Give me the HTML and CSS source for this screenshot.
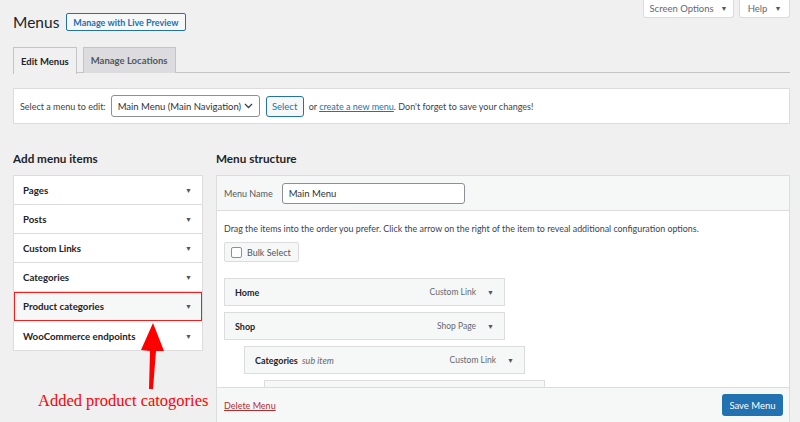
FILE: index.html
```html
<!DOCTYPE html>
<html>
<head>
<meta charset="utf-8">
<link rel="stylesheet" href="styles.css">
</head>
<body>
<div class="wrap">
  <div class="screen-meta">
    <button class="meta-btn meta-screen">Screen Options <span class="tri">▼</span></button>
    <button class="meta-btn meta-help">Help <span class="tri">▼</span></button>
  </div>
  <div class="title-row">
    <h1 class="title">Menus</h1>
    <a class="live-btn">Manage with Live Preview</a>
  </div>
  <div class="tabs">
    <span class="tab tab-active">Edit Menus</span>
    <span class="tab">Manage Locations</span>
  </div>
  <div class="manage-box">
    <span class="lbl">Select a menu to edit:</span>
    <span class="select"><span class="sel-text">Main Menu (Main Navigation)</span>
      <svg class="chev" width="9" height="6" viewBox="0 0 9 6"><path d="M1 1l3.5 3.5L8 1" fill="none" stroke="#3c434a" stroke-width="1.3"/></svg>
    </span>
    <span class="sel-btn">Select</span>
    <span class="lbl">or <a class="link">create a new menu</a>. Don't forget to save your changes!</span>
  </div>
  <div class="columns">
    <div class="col-left">
      <h2 class="col-title">Add menu items</h2>
      <div class="accordion">
        <div class="acc-row">Pages<span class="tri">▼</span></div>
        <div class="acc-row">Posts<span class="tri">▼</span></div>
        <div class="acc-row">Custom Links<span class="tri">▼</span></div>
        <div class="acc-row">Categories<span class="tri">▼</span></div>
        <div class="acc-row acc-hl">Product categories<span class="tri">▼</span></div>
        <div class="acc-row acc-last">WooCommerce endpoints<span class="tri">▼</span></div>
      </div>
      <svg class="arrow" width="30" height="70" viewBox="0 0 30 70">
        <path d="M16 0 L27 28 L19 28 L16 66 L12 66 L13 28 L4 27 Z" fill="#ff0000"/>
      </svg>
      <div class="note">Added product catogories</div>
    </div>
    <div class="col-right">
      <h2 class="col-title">Menu structure</h2>
      <div class="panel">
        <div class="panel-head">
          <span class="lbl">Menu Name</span>
          <span class="name-input">Main Menu</span>
        </div>
        <div class="panel-body">
          <p class="drag-text">Drag the items into the order you prefer. Click the arrow on the right of the item to reveal additional configuration options.</p>
          <div class="bulk"><span class="cbox"></span>Bulk Select</div>
          <div class="items">
            <div class="item"><span class="item-title">Home</span><span class="item-type">Custom Link</span><span class="tri">▼</span></div>
            <div class="item"><span class="item-title">Shop</span><span class="item-type">Shop Page</span><span class="tri">▼</span></div>
            <div class="item depth1"><span class="item-title">Categories <em class="sub">sub item</em></span><span class="item-type">Custom Link</span><span class="tri">▼</span></div>
            <div class="item depth2"></div>
          </div>
        </div>
        <div class="panel-foot">
          <a class="delete">Delete Menu</a>
          <span class="save">Save Menu</span>
        </div>
      </div>
    </div>
  </div>
</div>
</body>
</html>
```

FILE: styles.css
```css
* { box-sizing: border-box; }
html, body { margin: 0; padding: 0; }
body {
  background: #f0f0f1;
  font-family: Lato, "Open Sans", sans-serif;
  font-size: 9px;
  color: #3c434a;
  width: 800px;
  height: 422px;
  overflow: hidden;
}
.wrap { padding: 0 10px 0 13px; }
.tri { font-size: 7px; color: #50575e; }

.screen-meta { float: right; display: flex; gap: 5px; }
.meta-btn {
  height: 18px;
  background: #fff;
  border: 1px solid #dcdcde;
  border-top: none;
  border-radius: 0 0 3px 3px;
  font-family: inherit;
  font-size: 9.5px;
  color: #646970;
  padding: 0 0 1px;
  display: flex;
  align-items: center;
  justify-content: center;
  gap: 7px;
}
.meta-screen { width: 91px; }
.meta-help { width: 51px; }

.title-row { display: flex; align-items: center; padding-top: 13px; height: 31px; }
.title { font-size: 15.5px; font-weight: 400; color: #1d2327; margin: 0 7px 0 0; line-height: 18px; }
.live-btn {
  display: flex; align-items: center; height: 18px;
  border: 1px solid #2271b1; border-radius: 2px;
  background: #f6f7f7; color: #2271b1;
  font-size: 9px; font-weight: 700; padding: 0 6px;
}

.tabs { display: flex; gap: 6px; margin-top: 16px; border-bottom: 1px solid #c3c4c7; height: 26px; }
.tab {
  height: 26px; display: flex; align-items: center; padding: 0 7px;
  border: 1px solid #c3c4c7; border-bottom: none;
  background: #dcdcde; color: #50575e; font-weight: 700; font-size: 9.5px;
}
.tab-active { background: #f0f0f1; color: #1d2327; margin-bottom: -1px; height: 27px; }

.manage-box {
  margin-top: 15px; height: 36px; background: #fff;
  border: 1px solid #dcdcde;
  display: flex; align-items: center; padding: 0 6px;
  font-size: 9px; color: #3c434a;
}
.lbl { white-space: nowrap; }
.select {
  display: flex; align-items: center; justify-content: space-between;
  width: 149px; height: 22px; margin-left: 5px;
  border: 1px solid #8c8f94; border-radius: 3px; padding: 0 6px;
  font-size: 9.5px; color: #2c3338; background: #fff; white-space: nowrap;
}
.sel-btn {
  display: flex; align-items: center; justify-content: center;
  width: 38px; height: 21px; margin: 0 5px 0 6px;
  border: 1px solid #2271b1; border-radius: 3px; background: #f6f7f7; color: #2271b1; font-size: 9.5px;
}
.link { color: #2271b1; text-decoration: underline; }

.columns { display: flex; gap: 13px; margin-top: 27px; }
.col-left { width: 190px; position: relative; }
.col-right { flex: 1; }
.col-title { font-size: 11.7px; font-weight: 700; color: #1d2327; margin: 0; height: 24px; line-height: 14px; }

.accordion { background: #fff; border: 1px solid #dcdcde; }
.acc-row {
  height: 29px; display: flex; align-items: center; justify-content: space-between;
  padding: 0 10px 0 9px; border-bottom: 1px solid #dcdcde;
  font-size: 9.7px; font-weight: 700; color: #1d2327;
}
.acc-last { border-bottom: none; }
.acc-hl { background: #f6f7f7; outline: 1.5px solid #ff1a1a; outline-offset: -1px; }

.arrow { position: absolute; left: 124px; top: 172px; }
.note {
  margin-top: 40px; padding-left: 25px;
  font-family: "Liberation Serif", "Times New Roman", serif;
  font-size: 16.5px; color: #f00; white-space: nowrap;
}

.panel { border: 1px solid #dcdcde; border-bottom: none; background: #fff; display: flex; flex-direction: column; }
.panel-head {
  height: 35px; background: #f6f7f7; border-bottom: 1px solid #dcdcde;
  display: flex; align-items: center; padding: 0 7px; font-size: 9px; color: #50575e;
}
.name-input {
  display: flex; align-items: center; width: 183px; height: 21px; margin-left: 9px;
  background: #fff; border: 1px solid #8c8f94; border-radius: 3px; padding: 0 6px;
  font-size: 9.5px; color: #2c3338;
}
.panel-body { height: 176px; overflow: hidden; padding: 0 7px; }
.drag-text { margin: 11px 0 0; font-size: 8.9px; color: #3c434a; line-height: 13px; }
.bulk {
  display: inline-flex; align-items: center; gap: 5px;
  margin-top: 7px; height: 20px; padding: 0 7px 0 6px;
  background: #f6f7f7; border: 1px solid #dcdcde; border-radius: 2px;
  font-size: 9px; color: #50575e;
}
.cbox { width: 11px; height: 11px; border: 1px solid #8c8f94; border-radius: 2px; background: #fff; }
.items { display: flex; flex-direction: column; gap: 6px; margin-top: 16px; }
.item {
  width: 281px; height: 28px; display: flex; align-items: center; flex-shrink: 0;
  background: #f6f7f7; border: 1px solid #dcdcde; padding: 0 10px;
  font-size: 9px; color: #1d2327;
}
.item-title { font-weight: 700; flex: 1; }
.sub { font-weight: 400; font-style: italic; color: #646970; margin-left: 2px; }
.item-type { color: #646970; margin-right: 11px; font-size: 8.5px; }
.depth1 { margin-left: 20px; }
.depth2 { margin-left: 40px; }

.panel-foot {
  height: 40px; background: #f6f7f7; border-top: 1px solid #dcdcde;
  display: flex; align-items: flex-start; justify-content: space-between; padding: 6px 6px 0 7px;
}
.delete { color: #b32d2e; text-decoration: underline; font-size: 9px; margin-top: 6px; }
.save {
  display: flex; align-items: center; justify-content: center;
  width: 61px; height: 22px; background: #2271b1; color: #fff;
  border-radius: 3px; font-size: 9.5px;
}
```
